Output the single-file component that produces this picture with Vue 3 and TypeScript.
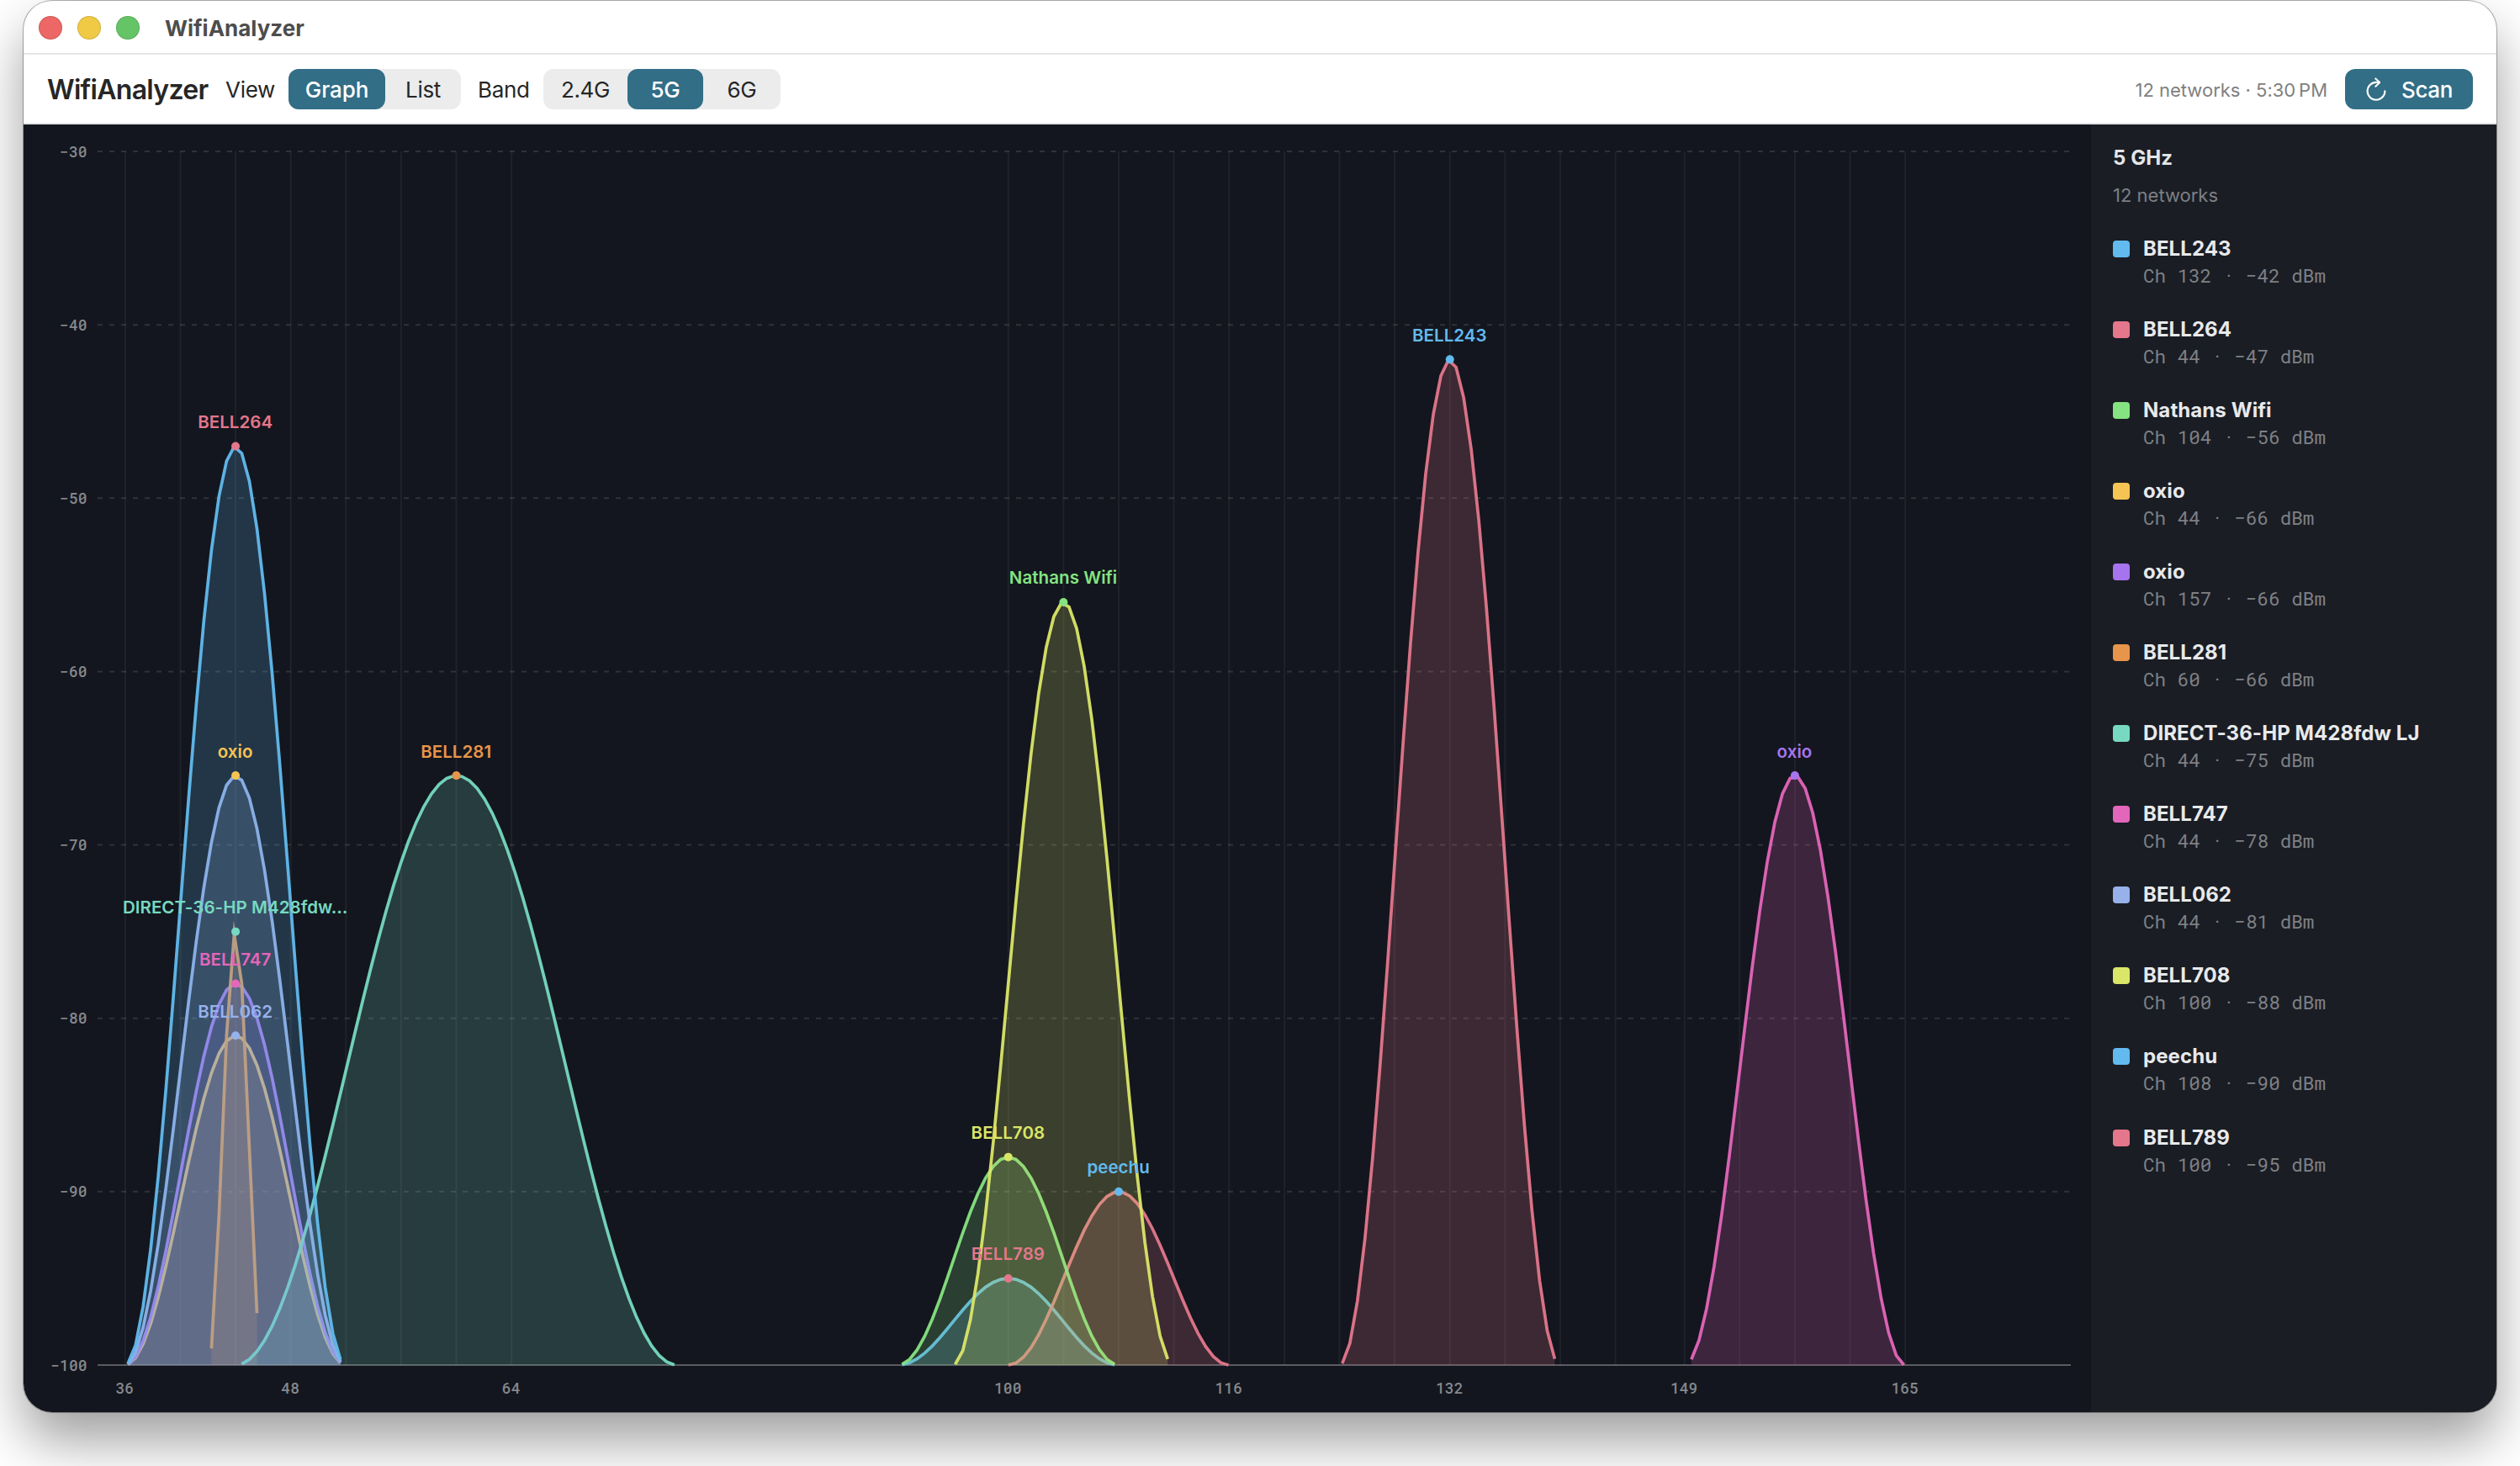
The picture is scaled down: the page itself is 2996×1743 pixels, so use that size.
<script setup lang="ts">
interface Network {
  name: string
  label?: string
  channel: number
  dbm: number
  half: number
  color: string
  curve: string
}

const palette = {
  blue: '#62baee',
  rose: '#e4778c',
  green: '#86e381',
  amber: '#f5c452',
  violet: '#a674ee',
  orange: '#e7954a',
  teal: '#77d9c1',
  magenta: '#e466ba',
  periwinkle: '#97b2ea',
  lime: '#dae668',
}

const networks: Network[] = [
  { name: 'BELL243', channel: 132, dbm: 42, half: 8, color: palette.blue, curve: palette.rose },
  { name: 'BELL264', channel: 44, dbm: 47, half: 8, color: palette.rose, curve: palette.blue },
  { name: 'Nathans Wifi', channel: 104, dbm: 56, half: 8, color: palette.green, curve: palette.lime },
  { name: 'oxio', channel: 44, dbm: 66, half: 8, color: palette.amber, curve: palette.periwinkle },
  { name: 'oxio', channel: 157, dbm: 66, half: 8, color: palette.violet, curve: palette.magenta },
  { name: 'BELL281', channel: 60, dbm: 66, half: 16, color: palette.orange, curve: palette.teal },
  { name: 'DIRECT-36-HP M428fdw LJ', label: 'DIRECT-36-HP M428fdw…', channel: 44, dbm: 75, half: 2, color: palette.teal, curve: palette.orange },
  { name: 'BELL747', channel: 44, dbm: 78, half: 8, color: palette.magenta, curve: palette.violet },
  { name: 'BELL062', channel: 44, dbm: 81, half: 8, color: palette.periwinkle, curve: palette.amber },
  { name: 'BELL708', channel: 100, dbm: 88, half: 8, color: palette.lime, curve: palette.green },
  { name: 'peechu', channel: 108, dbm: 90, half: 8, color: palette.blue, curve: palette.rose },
  { name: 'BELL789', channel: 100, dbm: 95, half: 8, color: palette.rose, curve: palette.blue },
]

// Plot geometry, in the coordinates of the chart's own SVG
const plot = { left: 88, right: 2434, top: 32, bottom: 1475 }
const firstChannel = 34
const lastChannel = 177
const samples = 260

const xOf = (channel: number) =>
  plot.left + ((channel - firstChannel) / (lastChannel - firstChannel)) * (plot.right - plot.left)
const yOf = (dbm: number) => plot.top + ((dbm - 30) / 70) * (plot.bottom - plot.top)

// Raised-cosine lobe sampled on a grid shared by all networks
function lobe(n: Network) {
  const pts: [number, number][] = []
  for (let i = 0; i <= samples; i++) {
    const ch = firstChannel + (i * (lastChannel - firstChannel)) / samples
    const d = Math.abs(ch - n.channel)
    if (d > n.half + 1e-6) continue
    const k = Math.cos((Math.PI * d) / (2 * n.half)) ** 2
    pts.push([xOf(ch), yOf(100 - (100 - n.dbm) * k)])
  }
  const line = pts.map(([x, y], i) => `${i ? 'L' : 'M'}${x.toFixed(2)} ${y.toFixed(2)}`).join('')
  const area = `${line}L${pts[pts.length - 1][0].toFixed(2)} ${plot.bottom}L${pts[0][0].toFixed(2)} ${plot.bottom}Z`
  return { line, area, color: n.curve }
}

const lobes = [...networks].reverse().map(lobe)
const levels = [30, 40, 50, 60, 70, 80, 90, 100]
const channels = [36, 40, 44, 48, 52, 56, 60, 64, 100, 104, 108, 112, 116, 120, 124, 128, 132, 136, 140, 144, 149, 153, 157, 161, 165]
const ticks = [36, 48, 64, 100, 116, 132, 149, 165]
</script>

<template>
  <div class="desktop">
    <div class="window">
      <header class="titlebar">
        <i class="light red"></i><i class="light yellow"></i><i class="light green"></i>
        <span class="title">WifiAnalyzer</span>
      </header>
      <div class="toolbar">
        <span class="brand">WifiAnalyzer</span>
        <span class="label view">View</span>
        <div class="segmented">
          <button class="on graph">Graph</button><button class="list">List</button>
        </div>
        <span class="label band">Band</span>
        <div class="segmented">
          <button class="b24">2.4G</button><button class="on b5">5G</button><button class="b6">6G</button>
        </div>
        <span class="status">12 networks · 5:30&#8239;PM</span>
        <button class="scan">
          <svg width="26" height="30" viewBox="0 0 26 30" fill="none" stroke="#fff" stroke-width="2.1" stroke-linecap="round" stroke-linejoin="round">
            <path d="M16.5 6.9 H13 A10.4 10.4 0 1 0 23.4 17.2" />
            <path d="M12.3 2.4 L17.2 6.9 L12.3 11.7" />
          </svg>
          <span>Scan</span>
        </button>
      </div>
      <main class="body">
        <svg class="chart" width="2458" height="1531" viewBox="0 0 2458 1531">
          <g stroke="#fff" stroke-opacity=".055" stroke-width="2">
            <line v-for="c in channels" :key="c" :x1="xOf(c)" :x2="xOf(c)" :y1="plot.top" :y2="plot.bottom" />
          </g>
          <g stroke="#fff" stroke-opacity=".12" stroke-width="2" stroke-dasharray="6 8">
            <line v-for="l in levels.slice(0, -1)" :key="l" :x1="plot.left" :x2="plot.right" :y1="yOf(l)" :y2="yOf(l)" />
          </g>
          <line :x1="plot.left" :x2="plot.right" :y1="plot.bottom" :y2="plot.bottom" stroke="#fff" stroke-opacity=".3" stroke-width="2" />
          <g v-for="(l, i) in lobes" :key="i">
            <path :d="l.area" :fill="l.color" fill-opacity=".2" />
            <path :d="l.line" fill="none" :stroke="l.color" stroke-opacity=".95" stroke-width="3.7" stroke-miterlimit="10" />
          </g>
          <g class="axis" text-anchor="end">
            <text v-for="l in levels" :key="l" x="75.5" :y="yOf(l) + 6.5">−{{ l }}</text>
          </g>
          <g class="axis" text-anchor="middle">
            <text v-for="t in ticks" :key="t" :x="xOf(t) - 0.5" y="1509">{{ t }}</text>
          </g>
          <g v-for="(n, i) in networks" :key="i" :fill="n.color">
            <circle :cx="xOf(n.channel)" :cy="yOf(n.dbm)" r="5" />
            <text class="peak" :x="xOf(n.channel) - 0.4" :y="yOf(n.dbm) - 21.5" text-anchor="middle">{{ n.label ?? n.name }}</text>
          </g>
        </svg>
        <aside class="sidebar">
          <h2>5 GHz</h2>
          <p class="count">12 networks</p>
          <ul>
            <li v-for="(n, i) in networks" :key="i">
              <i class="swatch" :style="{ background: n.color }"></i>
              <div>
                <div class="ssid">{{ n.name }}</div>
                <div class="detail">Ch {{ n.channel }} · −{{ n.dbm }} dBm</div>
              </div>
            </li>
          </ul>
        </aside>
      </main>
    </div>
  </div>
</template>

<style>
body { margin: 0; background: #fff; overflow: hidden; }
</style>

<style scoped>
.desktop {
  box-sizing: border-box;
  width: 2996px;
  height: 1743px;
  padding: 1px 28px 0;
  overflow: hidden;
  background: #fff;
  font-family: Inter, "Liberation Sans", sans-serif;
}
.window {
  width: 2940px;
  height: 1678px;
  border-radius: 34px;
  overflow: hidden;
  background: #fff;
  box-shadow: 0 0 0 1px rgba(0, 0, 0, .3), 0 34px 64px rgba(0, 0, 0, .38);
}
.titlebar {
  box-sizing: border-box;
  height: 64px;
  border-bottom: 2px solid #e6e6e6;
  display: flex;
  align-items: center;
  padding: 1px 0 0 18px;
}
.light {
  box-sizing: border-box;
  width: 28px;
  height: 28px;
  margin-right: 18px;
  border-radius: 50%;
  border: 1px solid rgba(0, 0, 0, .12);
}
.red { background: #ec6765; }
.yellow { background: #f0ca45; }
.green { background: #65c466; }
.title { margin-left: 12px; padding-top: 2px; font-size: 26px; font-weight: 700; color: #4d4d4d; line-height: 32px; }
.toolbar {
  box-sizing: border-box;
  height: 83px;
  border-bottom: 2px solid #e3e4e5;
  display: flex;
  align-items: center;
  padding: 1px 28px 0 28px;
  color: #262626;
}
.brand { width: 212px; font-size: 32px; font-weight: 600; letter-spacing: -.7px; white-space: nowrap; }
.label { padding-top: 1px; font-size: 26px; letter-spacing: -.3px; white-space: nowrap; }
.view { width: 75px; }
.band { width: 78px; margin-left: 20px; }
.segmented { display: flex; border-radius: 12px; background: #ececec; }
button {
  height: 48px;
  padding: 1px 0 0;
  border: 0;
  border-radius: 12px;
  background: transparent;
  font: 400 26px Inter, "Liberation Sans", sans-serif;
  letter-spacing: -.35px;
  color: #262626;
}
.on, .scan { background: #326e86; color: #fff; font-weight: 500; }
.graph { width: 115px; letter-spacing: -.1px; }
.list { width: 90px; }
.b24 { width: 100px; }
.b5 { width: 90px; }
.b6 { width: 92px; }
.status { margin-left: auto; padding-top: 1px; font-size: 22px; letter-spacing: -.02px; color: #808080; white-space: nowrap; }
.scan { display: flex; align-items: center; width: 152px; margin-left: 21px; padding-left: 24px; gap: 17px; }
.scan svg { flex: none; margin-top: -2px; }
.body { display: flex; height: 1531px; background: #13161e; }
.chart { flex: none; display: block; }
.axis { font: 500 18px "Roboto Mono", "DejaVu Sans Mono", monospace; fill: #85878c; }
.peak { font: 600 20.5px Inter, sans-serif; letter-spacing: .05px; }
.sidebar { box-sizing: border-box; flex: 1; padding: 26px 26px 0; background: #1a1d24; }
h2 { margin: 0; font-size: 24px; font-weight: 700; line-height: 28px; letter-spacing: .1px; color: #e4e5e7; }
.count { margin: 16px 0 0; font-size: 22px; line-height: 28px; color: #7d7f83; }
ul { list-style: none; margin: 32px 0 0; padding: 0; }
li { display: flex; gap: 16px; height: 96.05px; }
.swatch { width: 20px; height: 20px; margin-top: 8px; border-radius: 4px; }
.ssid { padding-top: 1px; font-size: 24px; font-weight: 700; line-height: 34px; letter-spacing: .08px; color: #e8e9eb; white-space: nowrap; }
.detail { margin-top: -2px; font: 22.6px/32px "Roboto Mono", "DejaVu Sans Mono", monospace; color: #7e8084; white-space: nowrap; }
</style>
